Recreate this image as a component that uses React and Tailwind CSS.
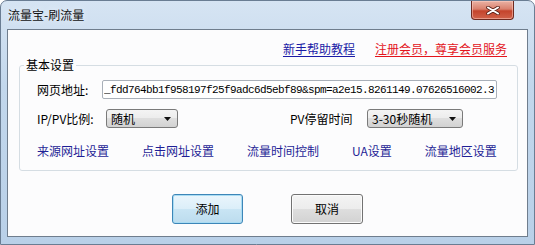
import React from 'react'

const comboBg = 'bg-[linear-gradient(#f4f4f4,#ececec_50%,#dedede_50%,#d2d2d2)]'

function Combo({ value, className }) {
  return (
    <div className={`flex items-center h-[19px] rounded-[3px] border border-[#7a7a7a] ${comboBg} pl-[4px] pr-[6px] ${className}`}>
      <span className="flex-1 leading-[12px] text-[#000]">{value}</span>
      <svg width="7" height="4" viewBox="0 0 7 4">
        <path d="M0 0h7L3.5 4z" fill="#111" />
      </svg>
    </div>
  )
}

export default function App() {
  const url = '_fdd764bb1f958197f25f9adc6d5ebf89&spm=a2e15.8261149.07626516002.3'

  return (
    <div className="w-[535px] h-[245px] flex flex-col overflow-hidden rounded-t-[7px] border border-[#6a7d93] bg-[linear-gradient(180deg,#d6e4f3,#c2d7ec_35%,#b9d0e8)] font-['Noto_Sans_CJK_SC',sans-serif] text-[12px] leading-[12px] text-black">
      {/* title bar */}
      <div className="h-[28px] flex items-start justify-between pl-[7px] pr-[20px]">
        <span className="mt-[8px] text-[#111] [text-shadow:0_0_6px_#eef5fc]">流量宝-刷流量</span>
        <div className="w-[43px] h-[19px] flex items-center justify-center rounded-b-[4px] border border-t-0 border-[#6e2a20] bg-[linear-gradient(#eab2a4,#d9806d_45%,#c4442c_55%,#d0624a)] shadow-[inset_0_0_0_1px_rgba(255,210,200,0.5)]">
          <svg width="16" height="9" viewBox="0 0 16 9">
            <path d="M3 1.5L13 7.5M13 1.5L3 7.5" stroke="#5a2219" strokeWidth="3.6" strokeLinecap="round" />
            <path d="M3 1.5L13 7.5M13 1.5L3 7.5" stroke="#fff" strokeWidth="2" strokeLinecap="round" />
          </svg>
        </div>
      </div>

      {/* client area */}
      <div className="flex-1 mx-[6px] mb-[7px] flex flex-col border border-[#6f7d8d] bg-[#fcfcfd]">
        <div className="flex justify-end gap-[20px] pt-[13px] pr-[20px]">
          <a className="text-[#1a1aa6] underline underline-offset-2 cursor-pointer">新手帮助教程</a>
          <a className="text-[#e3141c] underline underline-offset-2 cursor-pointer">注册会员，尊享会员服务</a>
        </div>

        <fieldset className="mt-[4px] ml-[11px] mr-[9px] rounded-[3px] border border-[#d5dde3] pb-[13px]">
          <legend className="ml-[4px] px-[2px] leading-[12px]">基本设置</legend>

          <div className="pl-[17px]">
            <div className="mt-[9px] flex items-center">
              <span className="w-[65px]">网页地址:</span>
              <input
                readOnly
                defaultValue={url}
                className="w-[395px] h-[19px] rounded-[2px] border border-[#a9b0b9] bg-white pl-[1px] font-['Liberation_Mono',monospace] text-[11px] tracking-[-0.6px] text-black outline-none"
              />
            </div>

            <div className="mt-[10px] flex items-center">
              <span className="w-[69px]">IP/PV比例:</span>
              <Combo value="随机" className="w-[72px]" />
              <span className="ml-[112px] w-[77px]">PV停留时间</span>
              <Combo value="3-30秒随机" className="w-[96px]" />
            </div>

            <div className="mt-[17px] flex gap-[33px] text-[#1f1f96]">
              <span>来源网址设置</span>
              <span>点击网址设置</span>
              <span>流量时间控制</span>
              <span>UA设置</span>
              <span>流量地区设置</span>
            </div>
          </div>
        </fieldset>

        <div className="mt-[23px] flex justify-center gap-[48px]">
          <button className="w-[71px] h-[30px] rounded-[3px] border border-[#3d86b8] bg-[linear-gradient(#eaf5fc,#dbeef9_50%,#c9e5f4_50%,#bcdcee)] shadow-[inset_0_0_0_1px_#a9dcf3]">
            添加
          </button>
          <button className={`w-[72px] h-[30px] rounded-[3px] border border-[#727272] ${comboBg} shadow-[inset_0_0_0_1px_#fbfbfb]`}>
            取消
          </button>
        </div>
      </div>
    </div>
  )
}
